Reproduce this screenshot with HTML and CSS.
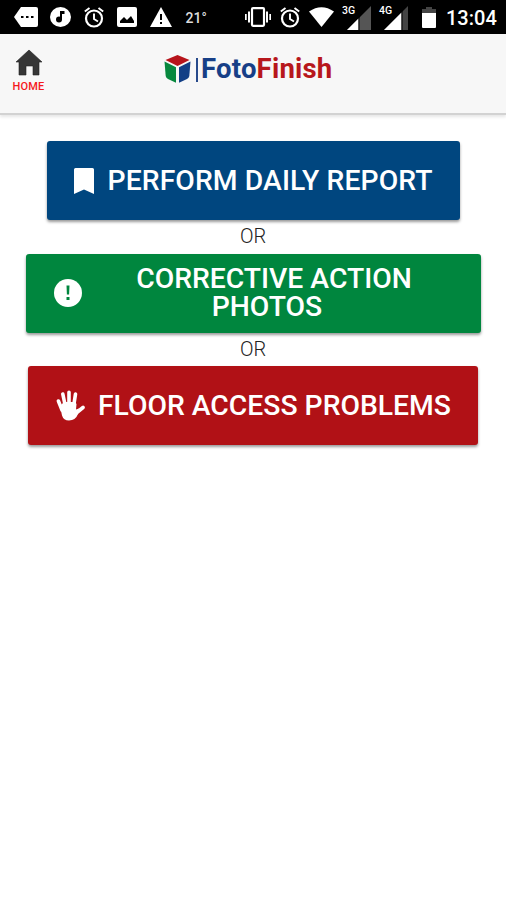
FILE: index.html
```
<!DOCTYPE html>
<html lang="en">
<head>
<meta charset="utf-8">
<title>FotoFinish</title>
<link rel="stylesheet" href="styles.css">
</head>
<body>
<div class="status">
  <div class="status-left">
    <svg width="24" height="20" viewBox="0 0 24 20"><path fill="#fff" d="M7 0h15q2 0 2 2v16q0 2-2 2H7L0 10z"/><path d="M7 9h2.500v2H7zM12 9h2.500v2h-2.500zM17 9h2.500v2h-2.500z"/></svg>
    <svg width="21" height="20" viewBox="0 0 21 20"><ellipse cx="10.500" cy="10" rx="10.500" ry="10" fill="#fff"/><circle cx="9" cy="12.500" r="3"/><path d="M10 4h4.500v3H12v5.500h-2z"/></svg>
    <svg width="20" height="21" viewBox="0 0 20 21" fill="none" stroke="#fff"><circle cx="10" cy="11.500" r="8" stroke-width="2.200"/><path stroke-width="1.900" d="M10 6.500v5.500l4 2.500M.8 4.500 5.500 1M19.200 4.500 14.500 1"/></svg>
    <svg width="20" height="20" viewBox="0 0 20 20"><rect width="20" height="20" rx="2" fill="#fff"/><path d="M3 16v-2l4-4 3 3 4-4 3 5v2z"/></svg>
    <svg width="22" height="20" viewBox="0 0 22 20"><path fill="#fff" d="M11 0 22 20H0z"/><path d="M10 7h2v6h-2zM10 15h2v2h-2z"/></svg>
    <span class="temp">21°</span>
  </div>
  <div class="status-right">
    <svg width="26" height="20" viewBox="0 0 26 20"><path fill="#fff" d="M0 7h1.700v6H0zM3 4.500h2v11H3zM21 4.500h2v11h-2zM24.300 7H26v6h-1.700z"/><rect x="7" y="1.200" width="12" height="17.600" rx="1" fill="none" stroke="#fff" stroke-width="2.200"/></svg>
    <svg width="20" height="21" viewBox="0 0 20 21" fill="none" stroke="#fff"><circle cx="10" cy="11.500" r="8" stroke-width="2.200"/><path stroke-width="1.900" d="M10 6.500v5.500l4 2.500M.8 4.500 5.500 1M19.200 4.500 14.500 1"/></svg>
    <svg width="25" height="20" viewBox="0 0 25 20"><path fill="#fff" d="M0 4.500Q12.500-4 25 4.500L12.500 20z"/></svg>
    <div class="signal"><span>3G</span><svg width="24" height="24" viewBox="0 0 24 24"><path fill="#555" d="M24 0v24H0z"/><path fill="#fff" d="M11.500 12.500V24H0z"/><path stroke="#000" d="M12 11v13"/></svg></div>
    <div class="signal"><span>4G</span><svg width="24" height="24" viewBox="0 0 24 24"><path fill="#444" d="M24 0v24H0z"/><path fill="#fff" d="M17.500 6.500V24H0z"/><path stroke="#000" d="M18 5v19"/></svg></div>
    <svg class="battery" width="14" height="21" viewBox="0 0 14 21"><path fill="#444" d="M4 0h6v2h4v4H0V2h4z"/><path fill="#fff" d="M0 6h14v14q0 1-1 1H1q-1 0-1-1z"/></svg>
    <span class="clock">13:04</span>
  </div>
</div>
<header class="header">
  <a class="home">
    <svg width="28" height="27" viewBox="0 0 28 27"><path fill="#363636" stroke="#222" stroke-width=".6" d="M14 1 27 13h-3v13h-6v-9h-7v9H4V13H1z"/></svg>
    <span>HOME</span>
  </a>
  <div class="brand">
    <svg width="27" height="28" viewBox="0 0 27 28"><path fill="#b7141b" d="M13.500 0 25.500 5 13.500 11 1.500 5z"/><path fill="#07883e" d="M.5 6.500 12 12.300v15.500L4 24q-2-1-2.300-3z"/><path fill="#123f86" d="M26.500 6.500 15 12.300v15.500l8-3.800q2-1 2.300-3z"/></svg>
    <i class="bar"></i>
    <span class="foto">Foto</span><span class="finish">Finish</span>
  </div>
</header>
<main class="main">
  <button class="btn blue">
    <svg width="20" height="26" viewBox="0 0 20 26"><path fill="#fff" d="M1.500 0h17Q20 0 20 1.500V26l-10-4.500L0 26V1.500Q0 0 1.500 0z"/></svg>
    <span>PERFORM DAILY REPORT</span>
  </button>
  <p class="or">OR</p>
  <button class="btn green">
    <svg width="28" height="28" viewBox="0 0 28 28"><circle cx="14" cy="14" r="14" fill="#fff"/><path fill="#00863e" d="M12.500 6.500h3l-.4 9h-2.200zM12.500 18h3v3h-3z"/></svg>
    <span>CORRECTIVE ACTION<br>PHOTOS&nbsp;&nbsp;</span>
  </button>
  <p class="or">OR</p>
  <button class="btn red">
    <svg width="29" height="31" viewBox="0 0 29 31"><g stroke="#fff" stroke-linecap="round" fill="none"><path stroke-width="3.600" d="M2.400 11 6 20M6.800 4 9.500 17M13 2.300v15M19.500 4 17.500 17"/><path stroke-width="3.600" d="M27 17.500 19 24"/></g><path fill="#fff" d="M4 16 8 12h11l1.500 2-.5 5.500 3-1L22 24q-2.500 6.500-9 6.500-5.500 0-7-5z"/></svg>
    <span>FLOOR ACCESS PROBLEMS</span>
  </button>
</main>
</body>
</html>
```
FILE: styles.css
```
* { box-sizing: border-box; }
body { margin: 0; min-height: 900px; background: #fff; font-family: Roboto, sans-serif; }
svg { display: block; flex: none; }
.status { display: flex; justify-content: space-between; height: 34px; padding: 7px 10px 0 14px; background: #000; color: #fff; }
.status-left, .status-right { display: flex; align-items: flex-start; }
.status-left { gap: 13px; }
.status-left svg:nth-child(2) { margin-left: -1.500px; }
.temp { margin-left: 1px; font-size: 14px; line-height: 22px; font-weight: 500; color: #ddd; }
.status-right { gap: 9px; }
.signal { display: flex; width: 29px; height: 24px; margin: -1px 0 0 -1px; }
.signal span { width: 5px; font-size: 10.500px; line-height: 10px; font-weight: 500; position: relative; z-index: 1; }
.battery { margin: 0 1px 0 5px; }
.clock { width: 50px; font-size: 20px; line-height: 22px; font-weight: 500; }
.header { display: grid; grid-template-columns: 164px auto; justify-content: start; height: 81px; background: #f7f7f7; border-bottom: 2px solid #d2d2d2; box-shadow: 0 2px 3px rgba(0, 0, 0, .1); }
.home { display: flex; flex-direction: column; align-items: center; width: 57px; padding-top: 15px; font-size: 11px; line-height: 13px; font-weight: 500; letter-spacing: .2px; color: #f5191c; }
.home span { margin-top: 4px; }
.brand { display: flex; align-items: flex-start; padding-top: 21px; font-size: 27.500px; line-height: 28px; font-weight: 700; letter-spacing: .2px; }
.bar { width: 2px; height: 24px; margin: 3px 3px 0 5px; background: #274a8b; }
.foto { color: #173f87; }
.finish { color: #b7171c; }
.main { display: flex; flex-direction: column; align-items: center; padding-top: 26px; }
.btn { display: flex; align-items: center; height: 79px; padding: 0; border: 0; border-radius: 3px; box-shadow: 0 2px 3px rgba(0, 0, 0, .4); color: #fff; font: 500 28.300px/28px Roboto, sans-serif; white-space: nowrap; }
.blue { width: 413px; padding-left: 27px; gap: 14px; background: #00467f; letter-spacing: .1px; }
.green { width: 455px; padding-left: 28px; background: #00863e; }
.green span { flex: 1; padding-right: 27px; padding-left: 13px; text-align: center; }
.red { width: 450px; padding-left: 28px; gap: 13px; background: #b11116; }
.or { height: 33.500px; margin: 0; padding-top: 5px; font-size: 20px; line-height: 23px; font-weight: 300; color: #222; }
```
